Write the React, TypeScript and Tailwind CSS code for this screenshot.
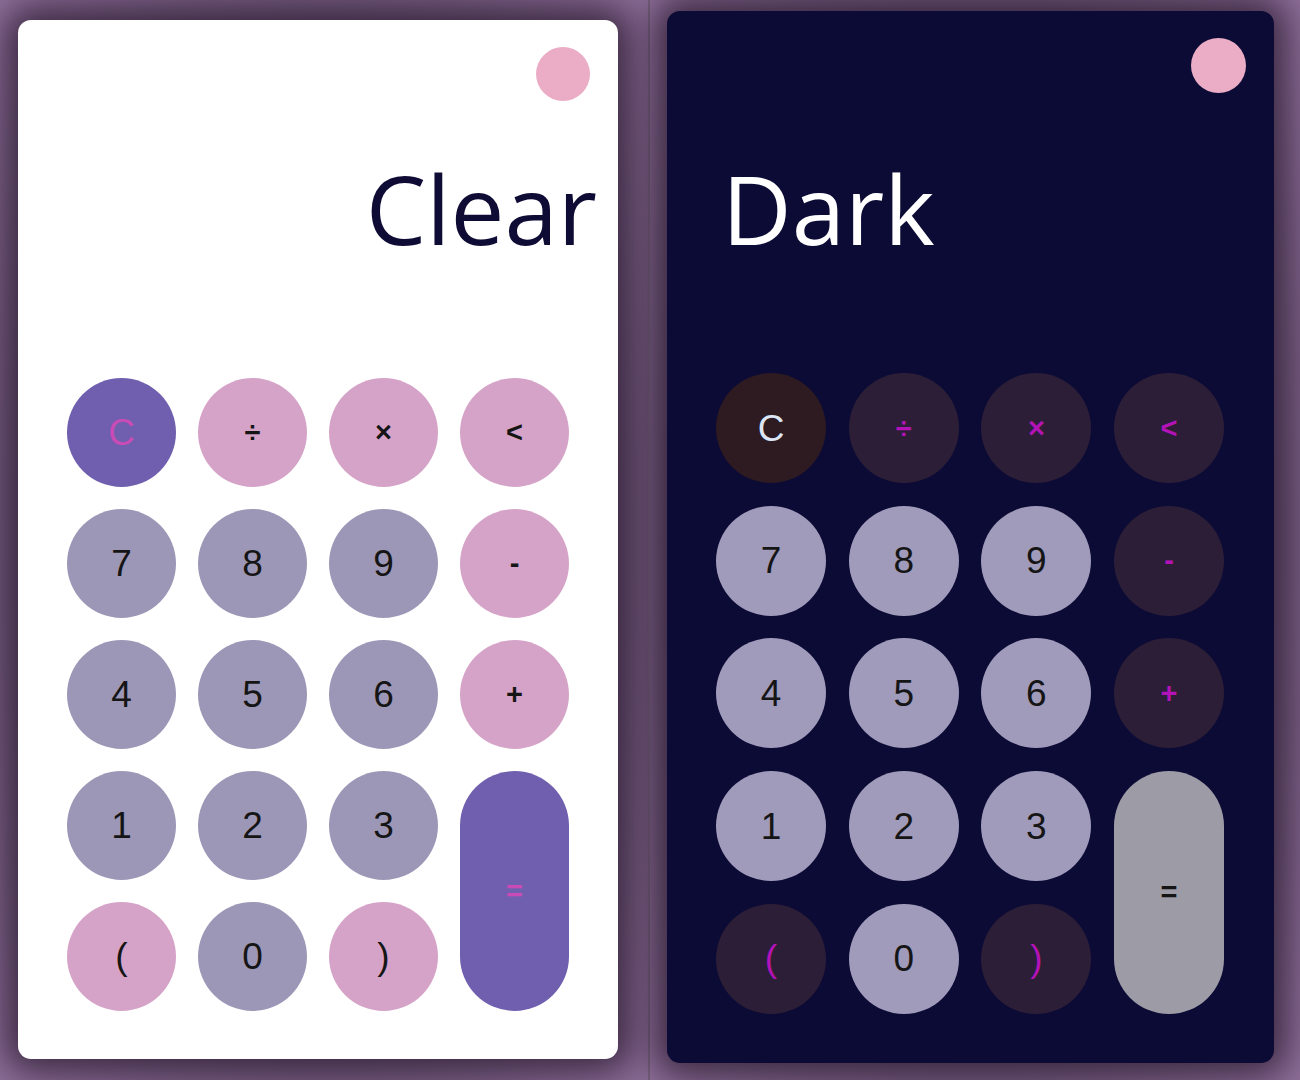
import React from "react";

type Btn = { label: string; kind: "clear" | "op" | "num" | "eq"; small?: boolean };

const keys: Btn[] = [
  { label: "C", kind: "clear" },
  { label: "÷", kind: "op", small: true },
  { label: "×", kind: "op", small: true },
  { label: "<", kind: "op", small: true },
  { label: "7", kind: "num" },
  { label: "8", kind: "num" },
  { label: "9", kind: "num" },
  { label: "-", kind: "op", small: true },
  { label: "4", kind: "num" },
  { label: "5", kind: "num" },
  { label: "6", kind: "num" },
  { label: "+", kind: "op", small: true },
  { label: "1", kind: "num" },
  { label: "2", kind: "num" },
  { label: "3", kind: "num" },
  { label: "=", kind: "eq", small: true },
  { label: "(", kind: "op" },
  { label: "0", kind: "num" },
  { label: ")", kind: "op" },
];

const lightCls: Record<Btn["kind"], string> = {
  clear: "bg-[#6f5fae] text-[#c84bb6]",
  op: "bg-[#d6a3c8] text-[#151515]",
  num: "bg-[#9d97b7] text-[#151515]",
  eq: "bg-[#6f5fae] text-[#c84bb6]",
};

const darkCls: Record<Btn["kind"], string> = {
  clear: "bg-[#2e1b21] text-[#dbe5f5]",
  op: "bg-[#2d1e37] text-[#b313b6]",
  num: "bg-[#a09abb] text-[#151515]",
  eq: "bg-[#9d9ba6] text-[#151515]",
};

function Keypad({ dark }: { dark: boolean }) {
  const cls = dark ? darkCls : lightCls;
  return (
    <div
      className={
        dark
          ? "grid grid-cols-[repeat(4,110px)] grid-rows-[repeat(5,110px)] gap-x-[22.7px] gap-y-[22.7px]"
          : "grid grid-cols-[repeat(4,109px)] grid-rows-[repeat(5,109px)] gap-x-[22px] gap-y-[22px]"
      }
    >
      {keys.map((k) => (
        <div
          key={k.label}
          className={
            "flex items-center justify-center rounded-full leading-none font-['Liberation_Sans',Arial,sans-serif] " +
            (k.small ? "text-[29px] font-bold " : "text-[37px] ") +
            cls[k.kind] +
            (k.kind === "eq" ? " col-start-4 row-start-4 row-span-2" : "")
          }
        >
          {k.label}
        </div>
      ))}
    </div>
  );
}

export default function App() {
  return (
    <div className="flex w-[1300px] h-[1080px] overflow-hidden font-['Open_Sans',sans-serif]">
      {/* Light */}
      <div className="w-[650px] h-full bg-[radial-gradient(ellipse_at_center,#5a4462_0%,#6e5578_60%,#8e6f99_100%)] pl-[18px] pt-[20px] border-r-2 border-[#77617d]">
        <div className="w-[600px] h-[1039px] bg-white rounded-[13px] shadow-[0_0_34px_12px_rgba(35,20,40,0.75)] flex flex-col">
          <div className="flex justify-end pt-[27px] pr-[28px]">
            <div className="w-[54px] h-[54px] rounded-full bg-[#ebacc5]" />
          </div>
          <div className="mt-[59px] pr-[21px] text-right text-[96px] leading-none text-[#0e0b35]">
            Clear
          </div>
          <div className="mt-[122px] pl-[49px]">
            <Keypad dark={false} />
          </div>
        </div>
      </div>
      {/* Dark */}
      <div className="w-[650px] h-full bg-[radial-gradient(ellipse_at_center,#5a4462_0%,#6e5578_60%,#8e6f99_100%)] pl-[17px] pt-[11px]">
        <div className="w-[607px] h-[1052px] bg-[#0c0b35] rounded-[13px] shadow-[0_0_34px_12px_rgba(35,20,40,0.75)] flex flex-col">
          <div className="flex justify-end pt-[27px] pr-[28px]">
            <div className="w-[55px] h-[55px] rounded-full bg-[#ebacc5]" />
          </div>
          <div className="mt-[67px] pl-[55px] text-left text-[96px] leading-none text-white">
            Dark
          </div>
          <div className="mt-[117px] pl-[49px]">
            <Keypad dark={true} />
          </div>
        </div>
      </div>
    </div>
  );
}
